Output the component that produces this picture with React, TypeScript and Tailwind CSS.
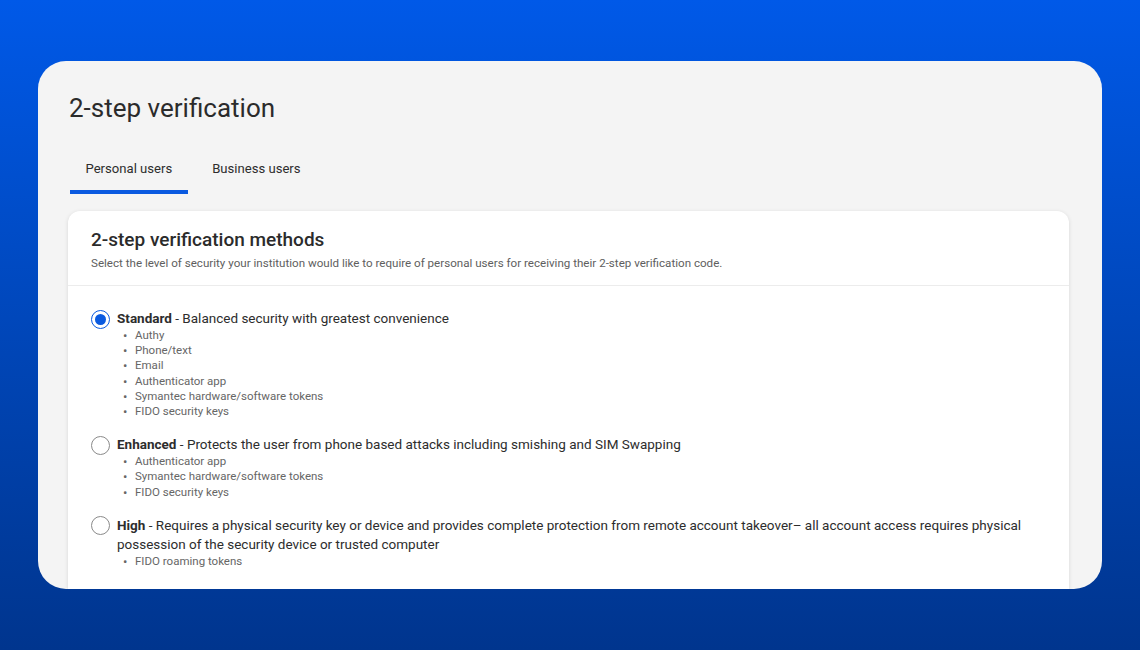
const methods = [
  {
    name: "Standard",
    description: "Balanced security with greatest convenience",
    items: [
      "Authy",
      "Phone/text",
      "Email",
      "Authenticator app",
      "Symantec hardware/software tokens",
      "FIDO security keys",
    ],
    checked: true,
  },
  {
    name: "Enhanced",
    description:
      "Protects the user from phone based attacks including smishing and SIM Swapping",
    items: ["Authenticator app", "Symantec hardware/software tokens", "FIDO security keys"],
    checked: false,
  },
  {
    name: "High",
    description:
      "Requires a physical security key or device and provides complete protection from remote account takeover\u2013 all account access requires physical possession of the security device or trusted computer",
    items: ["FIDO roaming tokens"],
    checked: false,
  },
];

function Radio({ checked }: { checked: boolean }) {
  return checked ? (
    <span className="mt-[0.5px] flex h-[19px] w-[19px] shrink-0 items-center justify-center rounded-full border-[1.5px] border-[#0a5ae0]">
      <span className="h-[11px] w-[11px] rounded-full bg-[#0a5ae0]" />
    </span>
  ) : (
    <span className="mt-[0.5px] h-[19px] w-[19px] shrink-0 rounded-full border border-[#8a8a8a] bg-white" />
  );
}

export default function App() {
  return (
    <div
      className="h-[650px] w-full overflow-hidden bg-gradient-to-b from-[#0059e8] to-[#00358e] px-[38px] pt-[61px]"
      style={{ fontFamily: "Roboto, 'Liberation Sans', sans-serif" }}
    >
      <div className="flex h-[528px] flex-col overflow-hidden rounded-[28px] bg-[#f4f4f4] pl-[30px] pr-[33px]">
        <h1 className="mt-[30px] pl-[1px] text-[26px] leading-[34px] text-[#2b2b2b]">
          2-step verification
        </h1>

        <div className="ml-[2px] mt-[34px] flex gap-[9px]">
          <button className="border-b-4 border-[#0a5ae0] px-[15.5px] pb-[11px] text-[13.1px] leading-[20px] text-[#2d2d2d]">
            Personal users
          </button>
          <button className="border-b-4 border-transparent px-[15.5px] pb-[11px] text-[13.1px] leading-[20px] text-[#2d2d2d]">
            Business users
          </button>
        </div>

        <div className="mt-[17px] flex-1 rounded-t-[12px] bg-white shadow-[0_1px_4px_rgba(0,0,0,0.12)]">
          <div className="border-b border-[#ececec] px-[23px] pb-[14px] pt-[17px]">
            <h2 className="text-[19px] font-medium leading-[24px] text-[#2b2b2b]">
              2-step verification methods
            </h2>
            <p className="mt-[3px] text-[11.6px] leading-[16px] text-[#5e5e5e]">
              Select the level of security your institution would like to require of personal users for receiving their 2-step verification code.
            </p>
          </div>

          <div className="flex flex-col gap-[16px] px-[23px] pt-[23px]">
            {methods.map((m) => (
              <div key={m.name} className="flex gap-[7px]">
                <Radio checked={m.checked} />
                <div className="flex-1">
                  <p className="text-[13.5px] leading-[19px] text-[#2d2d2d]">
                    <span className="font-bold">{m.name}</span> - {m.description}
                  </p>
                  <ul className="pl-[6px]">
                    {m.items.map((item) => (
                      <li
                        key={item}
                        className="flex text-[11.5px] leading-[15.2px] text-[#666666]"
                      >
                        <span className="w-[12px] shrink-0 text-[13px] leading-[15.2px]">•</span>
                        {item}
                      </li>
                    ))}
                  </ul>
                </div>
              </div>
            ))}
          </div>
        </div>
      </div>
    </div>
  );
}
